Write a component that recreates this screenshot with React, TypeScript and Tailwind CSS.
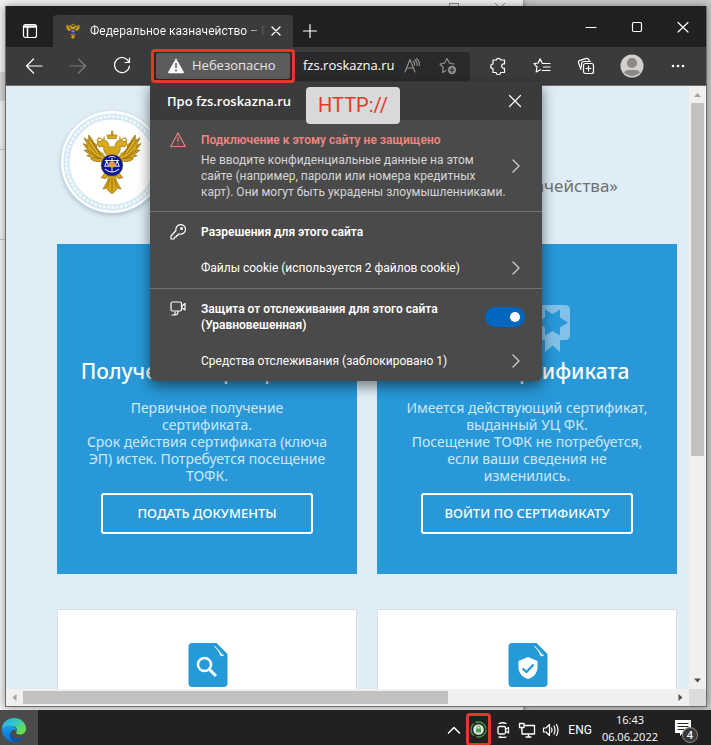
import type { ReactNode } from "react";

const ui = "font-['Open_Sans','Noto_Sans',sans-serif]";
const compact = "font-['Roboto','Open_Sans',sans-serif]";
const site = "font-['Noto_Sans','Open_Sans',sans-serif]";

function Eagle({ className }: { className: string }) {
  const wing = (
    <>
      <path d="M24 30 C20 32 12 34 7 29 L9 28 L3 26 L6 25 L0 20 L4 20 L-1 13 L4 15 L0 7 L5 10 L5 4 L9 9 L10 12 L13 14 L14 19 L20 24 Z" fill="#d3a518" stroke="#7c5c08" strokeWidth=".6" />
      <path d="M3 9 L14 25 M5 6 L16 24 M2 15 L14 28 M4 21 L17 29 M9 28 L19 29 M9 11 L18 26" stroke="#8a6608" strokeWidth=".8" fill="none" />
      <path d="M6 11 L15 23 M4 17 L15 26" stroke="#f3d251" strokeWidth=".7" fill="none" />
      <path d="M27 27 C22 25 20 20 21 16 C18 17 14 17 14 13 C14 11 15 10 17 11 C19 9 23 9 25 12 C27 15 26 19 29 21 Z" fill="#d9ab1c" stroke="#7c5c08" strokeWidth=".6" />
      <path d="M15 12 C13 10 15 6 18 8 C21 10 22 9 21 6" fill="none" stroke="#c89a16" strokeWidth="1.4" />
    </>
  );
  return (
    <svg viewBox="-1 -1 61 67" className={className} aria-hidden="true">
      {wing}
      <g transform="translate(59 0) scale(-1 1)">{wing}</g>
      <path d="M25 16 H34 L36 28 H23 Z" fill="#d3a518" />
      <path d="M26 4 h7 l1 4 h-9 Z M29 0 h1.400 v4 h-1.400 Z" fill="#d9ab1c" stroke="#8a6608" strokeWidth=".6" />
      <circle cx="25" cy="5" r="1.400" fill="#c89a16" />
      <circle cx="34" cy="5" r="1.400" fill="#c89a16" />
      <path d="M22 44 L18 49 L23 50 L26 46 L25 52 L20 61 L24 60 L26 63 L29.500 66 L33 63 L35 60 L39 61 L34 52 L33 46 L36 50 L41 49 L37 44 Z" fill="#d3a518" stroke="#7c5c08" strokeWidth=".6" />
      <path d="M29.500 50 V63 M27 51 L24 59 M32 51 L35 59" stroke="#8a6608" strokeWidth=".8" />
      <circle cx="29.500" cy="36" r="11.500" fill="#0b1596" stroke="#b08a10" strokeWidth=".6" />
      <path d="M29.500 28 V43 M22 31 H37 M24 31 L22 37 H26 Z M35 31 L33 37 H37 Z M22 40 Q29.500 46 37 40 M26 28 Q29.500 25 33 28" stroke="#dfe6ff" strokeWidth="1.100" fill="none" />
      <circle cx="29.500" cy="35" r="3.400" fill="#e89a3c" />
    </svg>
  );
}

function Line({ size = 16, w = 1.2, className = "", children }: { size?: number; w?: number; className?: string; children: ReactNode }) {
  return (
    <svg width={size} height={size} viewBox={`0 0 ${size} ${size}`} fill="none" stroke="currentColor" strokeWidth={w} strokeLinecap="round" strokeLinejoin="round" className={`shrink-0 ${className}`} aria-hidden="true">
      {children}
    </svg>
  );
}

function Chevron() {
  return (
    <Line className="text-[#d0d0d0]" w={1.3}>
      <path d="M4 2 L10 8 L4 14" />
    </Line>
  );
}

function IconButton({ label, className = "", children }: { label: string; className?: string; children: ReactNode }) {
  return (
    <button type="button" aria-label={label} className={`flex h-full shrink-0 items-center justify-center text-white ${className}`}>
      {children}
    </button>
  );
}

function TitleBar() {
  return (
    <header className="flex h-[41px] shrink-0 bg-[#202020]">
      <IconButton label="Меню вкладок" className="w-[47px] pt-2">
        <Line>
          <rect x="1.500" y="1.500" width="13" height="13" rx="2" />
          <path d="M1.500 4 H14.500 M2 3 H14 M5.500 5 V14" strokeWidth="1.500" />
        </Line>
      </IconButton>
      <div className="mt-[9px] flex w-60 items-center rounded-t-[4px] bg-[#3b3b3b] pr-2 pl-3 text-white">
        <Eagle className="h-4 w-4 shrink-0" />
        <span className={`ml-[9px] min-w-0 flex-1 overflow-hidden bg-linear-to-r from-white from-88% to-[#3b3b3b] bg-clip-text text-[12px] whitespace-nowrap text-transparent ${compact}`}>
          Федеральное казначейство – П
        </span>
        <button type="button" aria-label="Закрыть вкладку" className="flex w-[18px] justify-center">
          <Line size={10} w={1.4}>
            <path d="M1 1 L9 9 M9 1 L1 9" />
          </Line>
        </button>
      </div>
      <IconButton label="Новая вкладка" className="w-[34px] pt-2">
        <Line>
          <path d="M8 1.500 V14.500 M1.500 8 H14.500" />
        </Line>
      </IconButton>
      <div className="flex-1" />
      <IconButton label="Свернуть" className="w-[46px]">
        <Line size={12}>
          <path d="M1 6.500 H11" />
        </Line>
      </IconButton>
      <IconButton label="Развернуть" className="w-[46px]">
        <Line size={12}>
          <rect x="1.500" y="1.500" width="9" height="9" rx="1.200" />
        </Line>
      </IconButton>
      <IconButton label="Закрыть" className="w-[46px]">
        <Line size={12}>
          <path d="M1 1.500 L11 11 M11 1.500 L1 11" />
        </Line>
      </IconButton>
    </header>
  );
}

function SiteInfo() {
  return (
    <section aria-label="Сведения о сайте" className="absolute top-[30px] -left-0.5 z-10 w-[392px] rounded-b-[6px] bg-[#4a4a4a] text-[12px] leading-4 text-white shadow-[0_5px_14px_rgba(0,0,0,0.5)]">
      <div className="flex h-[38px] items-center justify-between bg-[#3b3b3b] pr-5 pl-[17px]">
        <h2 className="text-[13px] font-semibold">Про fzs.roskazna.ru</h2>
        <button type="button" aria-label="Закрыть сведения">
          <Line size={14}>
            <path d="M1.500 1.500 L12.500 12.500 M12.500 1.500 L1.500 12.500" />
          </Line>
        </button>
      </div>
      <div className="absolute top-[5px] left-[156px] flex h-[37px] w-[94px] items-center justify-center rounded-[4px] bg-[#d9d9d9] font-['Roboto',sans-serif] text-[20px] text-[#e5372c]">
        HTTP://
      </div>
      <div className={compact}>
        <button type="button" className="flex w-full items-center border-b border-[#727272] pt-3 pr-[17px] pb-[11px] pl-5 text-left">
          <Line className="mb-auto text-[#ee7f7a]" w={1.2}>
            <path d="M8 1 L15.300 14.500 H.7 Z M8 5.500 V9.500 M8 11.800 V12" />
          </Line>
          <span className="ml-[15px] flex-1">
            <span className="mb-1 block font-semibold text-[#f08580]">Подключение к этому сайту не защищено</span>
            <span className="block whitespace-nowrap text-[#d6d6d6]">
              Не вводите конфиденциальные данные на этом
              <br />
              сайте (например, пароли или номера кредитных
              <br />
              карт). Они могут быть украдены злоумышленниками.
            </span>
          </span>
          <Chevron />
        </button>
        <div className="border-b border-[#727272] py-3 pr-[17px] pl-5">
          <div className="flex items-center">
            <Line>
              <path d="M6 6.500 A4.800 4.800 0 1 1 9.500 10 L8 10 V11.500 H6.300 V13 H4.800 L4 15 L1 15 V12 Z" />
              <circle cx="11.500" cy="4.500" r=".9" />
            </Line>
            <h3 className="ml-[15px] font-semibold">Разрешения для этого сайта</h3>
          </div>
          <button type="button" className="mt-5 flex w-full items-center justify-between pl-[31px] text-left">
            Файлы cookie (используется 2 файлов cookie)
            <Chevron />
          </button>
        </div>
        <div className="py-3 pr-[17px] pl-5">
          <div className="flex items-center">
            <Line className="mb-auto">
              <rect x="1" y="1" width="10.500" height="9" rx="1.500" />
              <path d="M12 5 L15 2.500 V9 L12 7 M2 14 H5 C7 14 8 12.500 8 10.500 M5 11 V14" />
            </Line>
            <label htmlFor="tracking" className="ml-[15px] flex-1 font-semibold">
              Защита от отслеживания для этого сайта
              <br />
              (Уравновешенная)
            </label>
            <span className="relative flex">
              <input id="tracking" type="checkbox" role="switch" defaultChecked className="peer h-5 w-10 appearance-none rounded-full bg-[#777] checked:bg-[#0067c0]" />
              <span className="pointer-events-none absolute top-[5px] left-1 h-2.5 w-2.5 rounded-full bg-white peer-checked:left-[25px]" />
            </span>
          </div>
          <button type="button" className="mt-5 flex w-full items-center justify-between pl-[31px] text-left">
            Средства отслеживания (заблокировано 1)
            <Chevron />
          </button>
        </div>
      </div>
    </section>
  );
}

function Toolbar() {
  return (
    <nav className="flex h-[39px] shrink-0 items-center border-b border-[#6c6c6c] bg-[#3b3b3b] pr-1 pl-1.5">
      <IconButton label="Назад" className="w-11">
        <Line size={18}>
          <path d="M17 9 H1.500 M8.500 2 L1.500 9 L8.500 16" />
        </Line>
      </IconButton>
      <IconButton label="Вперёд" className="w-11">
        <Line size={18} className="text-[#7d7d7d]">
          <path d="M1 9 H16.500 M9.500 2 L16.500 9 L9.500 16" />
        </Line>
      </IconButton>
      <IconButton label="Обновить" className="w-11">
        <Line size={18}>
          <path d="M16 5.200 A7.500 7.500 0 1 0 16.500 9 M16.500 1 V5.500 H12" />
        </Line>
      </IconButton>
      <form className="relative ml-2 flex h-[29px] min-w-0 flex-1 items-center rounded-[3px] bg-[#2a2a2a] pr-1 pl-1 text-[13px]" onSubmit={(e) => e.preventDefault()}>
        <button type="button" className="flex h-[26px] w-[134px] shrink-0 items-center rounded-[2px] bg-[#5c5c5c] pl-3 text-[#e6e6e6]">
          <svg width="16" height="16" viewBox="0 0 16 16" className="shrink-0" aria-hidden="true">
            <path d="M8 .8 L15.500 14 Q15.800 15 15 15 H1 Q.2 15 .5 14 Z" fill="#fff" stroke="#fff" strokeWidth=".6" strokeLinejoin="round" />
            <path d="M8 5 V10 M8 11.500 V13.200" stroke="#5c5c5c" strokeWidth="1.600" />
          </svg>
          <span className="ml-2">Небезопасно</span>
        </button>
        <input aria-label="Адрес" defaultValue="fzs.roskazna.ru" className="ml-[13px] w-0 min-w-0 flex-1 bg-transparent text-white outline-none" />
        <IconButton label="Прочесть вслух" className="w-9">
          <Line size={18} className="text-[#8f8f8f]">
            <path d="M2 15 L7 2.500 L12 15 M4 11 H10 M10.500 4.500 Q12 6 11.500 8 M12 2.800 Q14.500 5 14 8.500 M13.500 1.500 Q17 4 16.300 8.500" />
          </Line>
        </IconButton>
        <IconButton label="Добавить в избранное" className="w-9">
          <Line size={18} className="text-[#8f8f8f]">
            <path d="M7 13.500 L3.500 15.500 L4.200 10.500 L1 7 L5.500 6.200 L8 1.500 L10.500 6.200 L15 7" />
            <circle cx="13" cy="13" r="4.200" fill="currentColor" stroke="none" />
            <path d="M13 10.800 V15.200 M10.800 13 H15.200" stroke="#2a2a2a" />
          </Line>
        </IconButton>
        <SiteInfo />
        <span className="pointer-events-none absolute -top-[3px] -left-px z-20 h-[34px] w-36 rounded-[4px] border-[3px] border-[#e5372c]" />
      </form>
      <IconButton label="Расширения" className="ml-1.5 w-11">
        <Line size={18}>
          <path d="M4 3 H7.200 A2.300 2.300 0 0 1 11.600 3 H15.500 V7 A2.200 2.200 0 1 0 15.500 11.200 V15.500 H11.600 A2.200 2.200 0 1 1 7.200 15.500 H4 V11.600 A2.300 2.300 0 1 1 4 7 Z" />
        </Line>
      </IconButton>
      <IconButton label="Избранное" className="w-11">
        <Line size={18}>
          <path d="M9 5.800 L7 1.800 L5.200 6 L1 6.700 L4 10 L3.200 15 L7.500 12.800 M9.500 6.500 H17 M10.500 10 H17 M9.500 13.500 H17" />
        </Line>
      </IconButton>
      <IconButton label="Коллекции" className="w-11">
        <Line size={18}>
          <rect x="6.500" y="6.500" width="10" height="10" rx="2" />
          <path d="M11.500 9 V14 M9 11.500 H14 M4 12.500 L1.600 6 Q1 4 3 3.300 L9.500 1.400 Q11.500 1 12.300 3.500 M4.500 10 V7 Q4.500 4.500 7 4.500 H13.500" />
        </Line>
      </IconButton>
      <IconButton label="Профиль" className="ml-0.5 w-11">
        <svg width="24" height="24" viewBox="0 0 24 24" aria-hidden="true">
          <circle cx="12" cy="12" r="11.500" fill="#d2d0ce" />
          <circle cx="12" cy="9" r="5" fill="#8b8886" />
          <path d="M4 18.500 Q5 16 8 16 H16 Q19 16 20 18.500 A11 11 0 0 1 4 18.500 Z" fill="#8b8886" />
        </svg>
      </IconButton>
      <IconButton label="Параметры" className="w-12">
        <svg width="16" height="4" viewBox="0 0 16 4" fill="#fff" aria-hidden="true">
          <circle cx="3" cy="2" r="1.300" />
          <circle cx="8" cy="2" r="1.300" />
          <circle cx="13" cy="2" r="1.300" />
        </svg>
      </IconButton>
    </nav>
  );
}

function ServiceCard({ title, lines, action, icon }: { title: string; lines: string[]; action: string; icon: ReactNode }) {
  return (
    <article className="flex h-[330px] flex-col items-center bg-[#2898d8] pt-[60px] text-center text-white">
      {icon}
      <h2 className="mt-1 text-[21px] leading-7 font-medium whitespace-nowrap">{title}</h2>
      <p className="mt-3.5 text-[14px] leading-[17px] whitespace-nowrap text-[#cde8f8]">
        {lines.map((line) => (
          <span key={line} className="block">
            {line}
          </span>
        ))}
      </p>
      <button type="button" className="mt-[9px] h-[41px] w-[212px] rounded-[3px] border-2 border-white text-[13px] font-medium">
        {action}
      </button>
    </article>
  );
}

function FileIcon({ children }: { children: ReactNode }) {
  return (
    <svg width="40" height="44" viewBox="0 0 40 44" aria-hidden="true">
      <path d="M4 0 H28.500 L39.500 11 V40 Q39.500 44 35.500 44 H4 Q.5 44 .5 40 V4 Q.5 0 4 0 Z" fill="#259ad8" />
      <path d="M26 3 L27 3 L36 12.500 Q34 13.500 32.500 13 Q31.500 9 26 3 Z" fill="#fff" />
      <path d="M28 3.500 L35.500 11.500 Q33.500 11.500 33 10 Z" fill="#259ad8" />
      {children}
    </svg>
  );
}

function WebPage() {
  return (
    <main className={`min-h-0 min-w-0 flex-1 overflow-hidden bg-[#dfeef6] ${site}`}>
      <div className="flex h-[158px] items-center justify-between pr-[71px] pl-[55px]">
        <div className="mt-[-7px] flex h-[102px] w-[102px] shrink-0 items-center justify-center rounded-full bg-white shadow-[0_2px_5px_rgba(60,90,120,0.35)]">
          <svg viewBox="0 0 102 102" className="h-[102px] w-[102px]" aria-hidden="true">
            <circle cx="51" cy="51" r="45.500" fill="none" stroke="#d5e8f3" strokeWidth="6" />
            <circle cx="51" cy="51" r="45.500" fill="none" stroke="#f3fafd" strokeWidth="3" strokeDasharray="0.1 4.300" strokeLinecap="round" />
            <foreignObject x="22" y="19" width="58" height="64">
              <Eagle className="h-[64px] w-[58px]" />
            </foreignObject>
          </svg>
        </div>
        <h1 className="mt-[42px] text-[17px] text-[#6e7072]">Федерального казначейства»</h1>
      </div>
      <div className="grid grid-cols-2 gap-x-5 gap-y-[35px] pr-3 pl-[51px]">
        <ServiceCard
          title="Получение сертификата"
          lines={["Первичное получение", "сертификата.", "Срок действия сертификата (ключа", "ЭП) истек. Потребуется посещение", "ТОФК."]}
          action="ПОДАТЬ ДОКУМЕНТЫ"
          icon={
            <svg width="86" height="49" viewBox="0 0 86 49" className="fill-[#82c1e8]" aria-hidden="true">
              <rect x="20" y="1" width="46" height="34" rx="4" />
            </svg>
          }
        />
        <ServiceCard
          title="Смена сертификата"
          lines={["Имеется действующий сертификат,", "выданный УЦ ФК.", "Посещение ТОФК не потребуется,", "если ваши сведения не", "изменились."]}
          action="ВОЙТИ ПО СЕРТИФИКАТУ"
          icon={
            <svg width="86" height="49" viewBox="0 0 86 49" aria-hidden="true">
              <path d="M6 1 H81 Q86 1 86 6 V31 Q86 36 81 36 H76 V48 L68.500 41.500 L61 48 V36 H6 Q1 36 1 31 V6 Q1 1 6 1 Z" fill="#82c1e8" />
              <path d="M68.500 27 L61 31.500 V23.500 L53 18.500 L61 13.500 V5.500 L68.500 10 L76 5.500 V13.500 L84 18.500 L76 23.500 V31.500 Z" fill="#2898d8" />
            </svg>
          }
        />
        <article className="flex h-[300px] justify-center border border-[#dcdfe1] bg-white pt-[33px] pl-0.5">
          <FileIcon>
            <circle cx="16.500" cy="21.500" r="6.500" fill="none" stroke="#fff" strokeWidth="2.500" />
            <path d="M21 26 L28 33" stroke="#fff" strokeWidth="3" />
          </FileIcon>
        </article>
        <article className="flex h-[300px] justify-center border border-[#dcdfe1] bg-white pt-[33px] pl-0.5">
          <FileIcon>
            <path d="M20 14 L29.500 18 V24 C29.500 30 25.500 34.500 20 36 C14.500 34.500 10.500 30 10.500 24 V18 Z" fill="#fff" />
            <path d="M14.500 25.500 L18.500 29 L25.500 21.500" stroke="#259ad8" strokeWidth="2.300" fill="none" />
          </FileIcon>
        </article>
      </div>
    </main>
  );
}

function Arrow({ d, dark }: { d: string; dark?: boolean }) {
  return (
    <svg width="17" height="17" viewBox="0 0 17 17" className={dark ? "shrink-0 fill-[#505050]" : "shrink-0 fill-[#a3a3a3]"} aria-hidden="true">
      <path d={d} />
    </svg>
  );
}

function Browser() {
  return (
    <div className="relative flex min-h-0 flex-1 flex-col border-x border-b border-[#6d6d6d] shadow-[0_0_8px_rgba(0,0,0,0.4)]">
      <TitleBar />
      <Toolbar />
      <div className="flex min-h-0 flex-1">
        <WebPage />
        <div className="flex w-[17px] shrink-0 flex-col items-center bg-[#f0f0f0]">
          <Arrow d="M5 11 L8.500 7 L12 11 Z" />
          <div className="w-[13px] flex-[353] bg-[#c1c1c1]" />
          <div className="flex-[216]" />
          <Arrow d="M5 6.500 L8.500 10.500 L12 6.500 Z" dark />
        </div>
      </div>
      <div className="flex h-[17px] shrink-0 items-center bg-[#f0f0f0]">
        <Arrow d="M10.500 5 L6.500 8.500 L10.500 12 Z" />
        <div className="h-[13px] flex-[425] bg-[#c1c1c1]" />
        <div className="flex-[224]" />
        <Arrow d="M6.500 5 L10.500 8.500 L6.500 12 Z" dark />
        <div className="h-full w-[17px] bg-[#dcdcdc]" />
      </div>
    </div>
  );
}

function EdgeLogo() {
  return (
    <svg width="26" height="26" viewBox="0 0 26 26" aria-hidden="true">
      <defs>
        <linearGradient id="edgeTop" x1="0" y1="0" x2="1" y2=".6">
          <stop offset="0" stopColor="#2aa9ea" />
          <stop offset=".5" stopColor="#31c6c9" />
          <stop offset="1" stopColor="#6be04d" />
        </linearGradient>
        <linearGradient id="edgeLeft" x1="0" y1="0" x2="0" y2="1">
          <stop offset="0" stopColor="#1b9de6" />
          <stop offset="1" stopColor="#0b6fd0" />
        </linearGradient>
      </defs>
      <path d="M1 12 C1 5 7 1 13 1 C20 1 25 6 25 11.500 C25 15.500 22 17.500 19 17.500 C16 17.500 14.500 16.500 15.500 15 C17 12.500 15 9 11 9 C6 9 1.500 11 1 15 Z" fill="url(#edgeTop)" />
      <path d="M1 13 C2 9 7 7.500 11 9 C14 10 16 12 15.700 14.500 C14 12 11 12.500 10 15 C8.500 19 12 24 16 24.500 C8 26.500 1 20.500 1 13 Z" fill="url(#edgeLeft)" />
      <path d="M10 15 C9 21 16 23 23 19.500 C21 23 18 25 14.500 25 C9 24 7.500 18 10 15 Z" fill="#0b54a5" />
    </svg>
  );
}

function Taskbar() {
  return (
    <footer className="z-10 h-[35px] shrink-0 overflow-hidden bg-[#212121]">
      <div className="flex h-10 items-center text-white">
        <button type="button" aria-label="Microsoft Edge" className="flex h-full w-[38px] items-center bg-[#4b4b4b] pl-px">
          <EdgeLogo />
        </button>
        <div className="flex-1" />
        <button type="button" aria-label="Скрытые значки" className="mr-[5px]">
          <Line size={14} w={1.5}>
            <path d="M1.500 10 L7 4.500 L12.500 10" />
          </Line>
        </button>
        <button type="button" aria-label="КриптоПро" className="mb-1 flex h-[33px] w-[25px] items-center justify-center self-end rounded-[4px] border-[3px] border-[#e5372c]">
          <svg width="17" height="17" viewBox="0 0 17 17" className="shrink-0" aria-hidden="true">
            <circle cx="8.500" cy="8.500" r="7.500" fill="none" stroke="#3f9a45" strokeWidth="1.300" strokeDasharray="14 2" />
            <circle cx="8.500" cy="8.500" r="5.300" fill="#e2e8e2" />
            <path d="M6 7.500 H11 V11.500 H6 Z" fill="#4aa24f" />
            <path d="M7 7.500 V6.300 A1.500 1.500 0 0 1 10 6.300 V7.500" fill="none" stroke="#4aa24f" />
          </svg>
        </button>
        <button type="button" aria-label="Собрание" className="ml-1">
          <Line w={1.3}>
            <rect x="3" y="4.500" width="7.500" height="7.500" rx="1.500" />
            <path d="M11 7 L13.500 5.500 V11 L11 9.500 M4 1.500 Q8 0 11 1.500 M4 15 Q8 16 11 15" />
          </Line>
        </button>
        <button type="button" aria-label="Сеть" className="ml-[7px]">
          <Line size={18} w={1.3}>
            <path d="M6 4.500 H16.500 V13 H4 V8 M8 16 H13 M10.500 13 V16 M1.500 2.500 H6 V6.500 H1.500 Z M3.800 6.500 V10" />
          </Line>
        </button>
        <button type="button" aria-label="Громкость" className="ml-1.5">
          <Line size={18} w={1.2}>
            <path d="M1.500 7 H4 L7.500 3.500 V14.500 L4 11 H1.500 Z M9.500 7 Q10.500 9 9.500 11 M12 5 Q14 9 12 13 M14.500 3.500 Q17.500 9 14.500 14.500" />
          </Line>
        </button>
        <button type="button" className={`ml-2 text-[12px] ${compact}`}>
          ENG
        </button>
        <time className="ml-2.5 block pb-[5px] text-center text-[11px] leading-[17px]">
          16:43
          <br />
          06.06.2022
        </time>
        <button type="button" aria-label="Уведомления: 4" className="relative mr-[10px] ml-[15px] flex h-6 w-7 items-start">
          <svg width="20" height="20" viewBox="0 0 20 20" aria-hidden="true">
            <path d="M2 2 H18 V15 H10 L7 18 V15 H2 Z" fill="#fff" />
            <path d="M4.500 5.500 H15.500 M4.500 8.500 H15.500 M4.500 11.500 H11" stroke="#212121" strokeWidth="1.200" />
          </svg>
          <span className="absolute top-[9px] left-[9px] flex h-4 w-4 items-center justify-center rounded-full border border-[#8b8b8b] bg-[#3a3a3a] text-[11px] font-semibold">4</span>
        </button>
      </div>
    </footer>
  );
}

function BackgroundWindows() {
  return (
    <div className="absolute inset-0 bg-[#c9c9c9]" aria-hidden="true">
      <div className="absolute top-0 left-0 h-full w-[523px] bg-[#f1f1f1] shadow-[0_0_6px_rgba(0,0,0,0.5)]">
        <div className="absolute top-[72px] left-0 h-[29px] w-10 bg-[#d6d6d6]" />
        <div className="absolute top-[149px] left-0 h-px w-10 bg-[#c8c8c8]" />
        <div className="absolute top-[239px] left-0 h-px w-10 bg-[#c8c8c8]" />
        <div className="absolute top-[3px] left-[449px] h-2.5 w-2.5 border border-[#8c8c8c]" />
        <Line size={10} w={1} className="absolute top-[3px] left-[495px] text-[#8c8c8c]">
          <path d="M0 0 L10 10 M10 0 L0 10" />
        </Line>
      </div>
    </div>
  );
}

export default function App() {
  return (
    <div className={`relative flex h-screen flex-col overflow-hidden ${ui}`}>
      <BackgroundWindows />
      <div className="relative flex min-h-0 flex-1 flex-col pt-1.5 pr-1 pb-[3px] pl-[5px]">
        <Browser />
      </div>
      <Taskbar />
    </div>
  );
}
